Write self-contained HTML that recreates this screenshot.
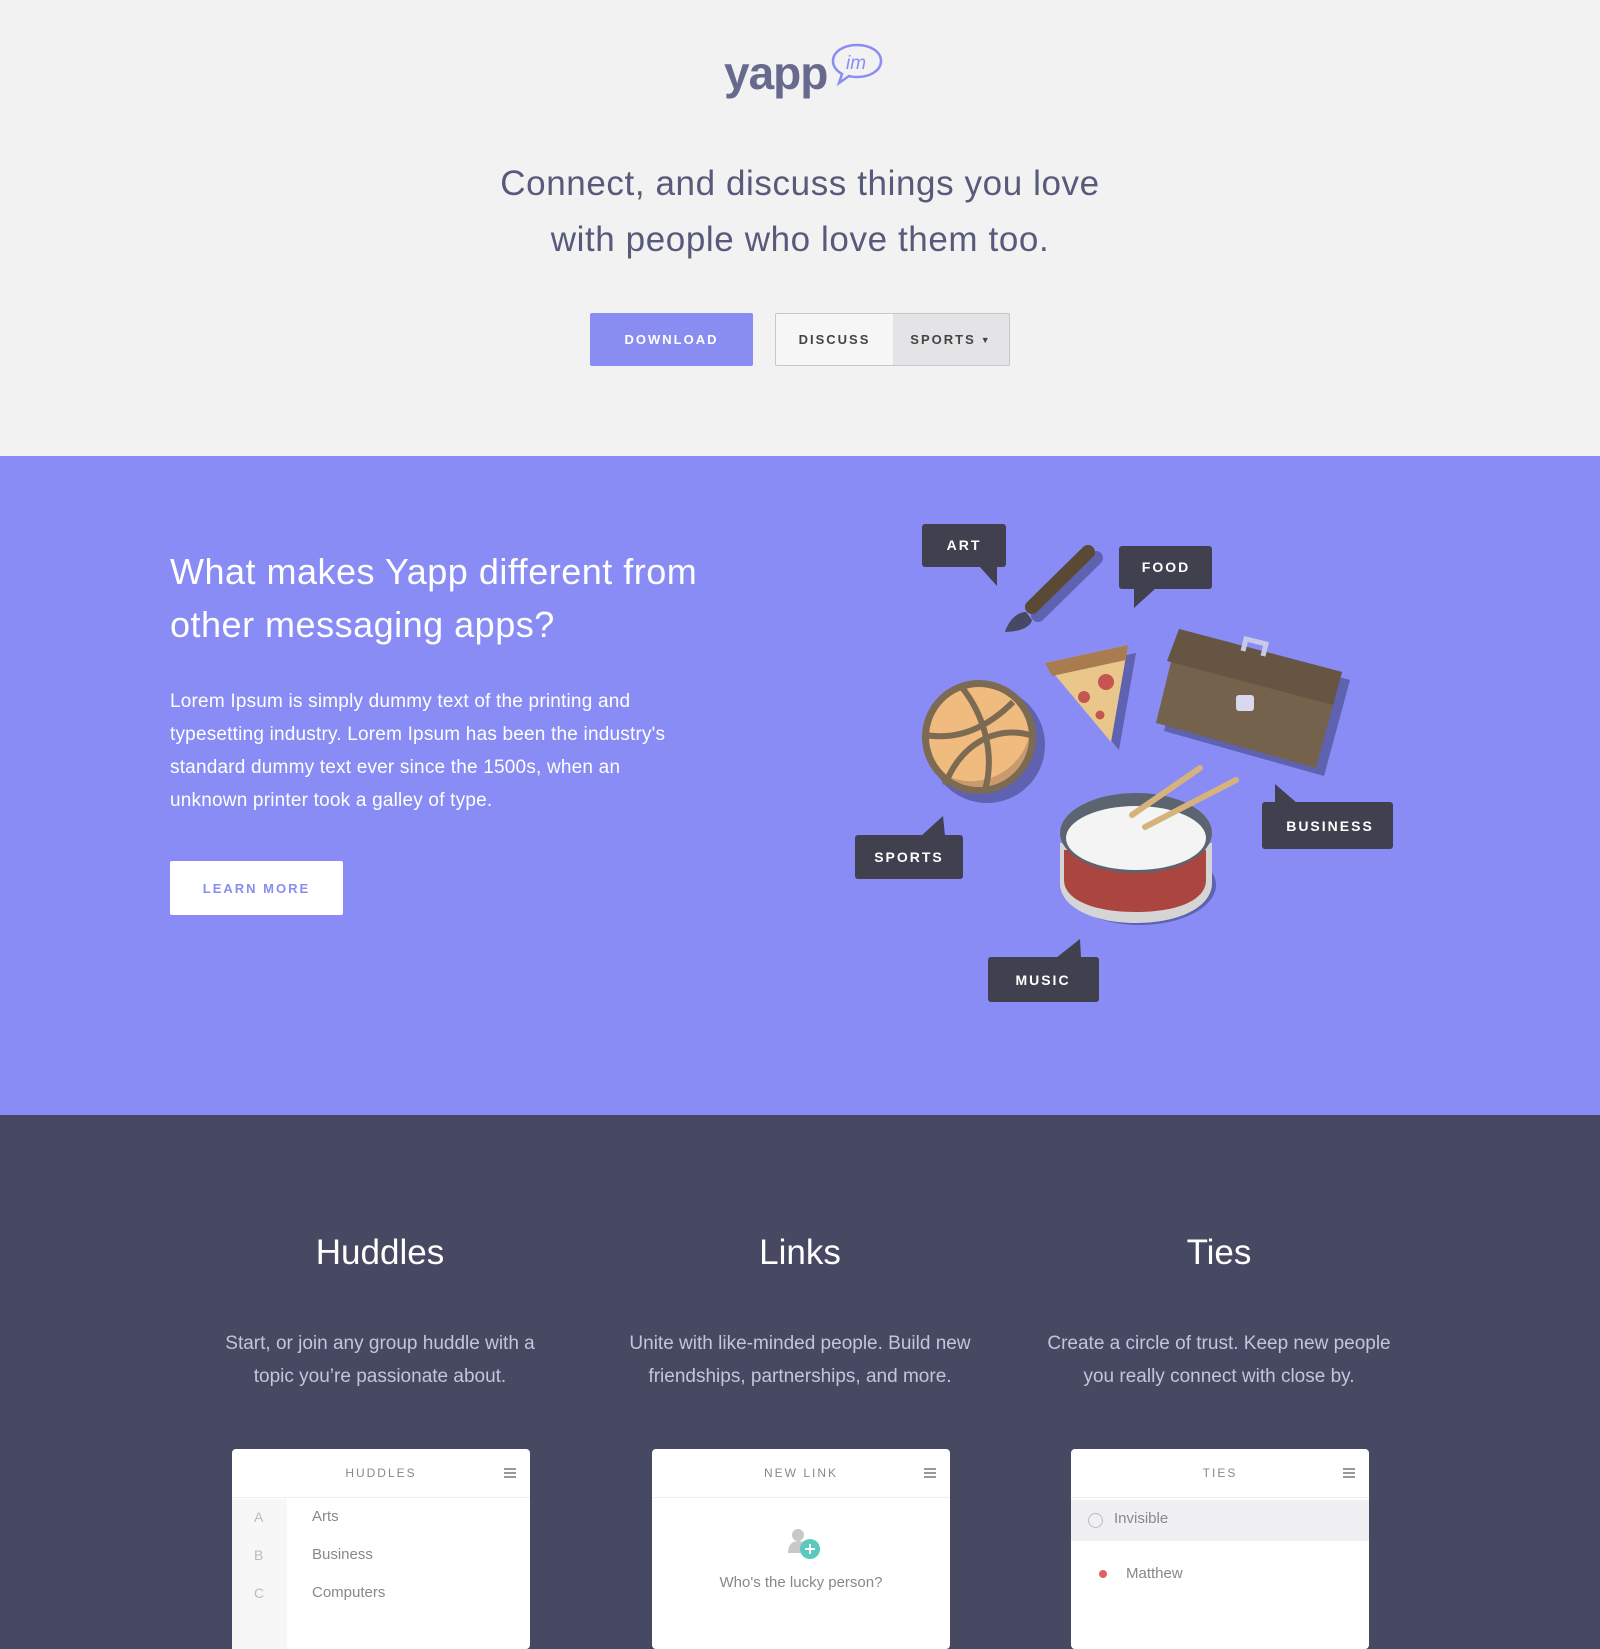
<!DOCTYPE html>
<html><head><meta charset="utf-8"><style>
*{margin:0;padding:0;box-sizing:border-box}
body{width:1600px;height:1600px;overflow:hidden;font-family:"Liberation Sans","DejaVu Sans",sans-serif;background:#474862;position:relative}
.top{position:absolute;left:0;top:0;width:1600px;height:456px;background:#f2f2f2}
.abs{position:absolute}
.btn{position:absolute;font-size:13px;letter-spacing:2px;font-weight:bold;display:flex;align-items:center;justify-content:center}
.purple{position:absolute;left:0;top:456px;width:1600px;height:659px;background:#898cf5}
.card{position:absolute;top:1449px;width:298px;height:200px;background:#fff;border-radius:4px}
.ch{height:49px;border-bottom:1px solid #eee;text-align:center;line-height:49px;font-size:12px;letter-spacing:2px;color:#888;position:relative}
.ch i{position:absolute;right:14px;top:19px;width:12px;height:2px;background:#999;box-shadow:0 4px 0 #999,0 8px 0 #999}
.feat h2{position:absolute;width:420px;text-align:center;font-weight:normal;color:#fff;font-size:35px}
.feat p{position:absolute;width:420px;text-align:center;color:#c4c5d6;font-size:19px;line-height:33px;white-space:nowrap}
</style></head><body>
<div class="top"></div>
<div class="abs" style="left:724px;top:46px;font-size:46px;font-weight:bold;color:#676a8c;letter-spacing:-1px">yapp</div>
<svg class="abs" style="left:828px;top:42px" width="58" height="46" viewBox="0 0 58 46"><path d="M29 3C15 3 5 10 5 19c0 6 4 10 9 13l-3 9 10-7c3 1 5 1 8 1 14 0 24-7 24-16S43 3 29 3z" fill="none" stroke="#8a8df2" stroke-width="2.5"/><text x="28" y="27" text-anchor="middle" font-family="Liberation Sans" font-style="italic" font-size="19" fill="#8a8df2">im</text></svg>
<div class="abs" style="left:0;top:156px;width:1600px;text-align:center;color:#575a7a;font-size:35px;line-height:56px;letter-spacing:0.6px">Connect, and discuss things you love<br>with people who love them too.</div>
<div class="btn" style="left:590px;top:313px;width:163px;height:53px;background:#898cf0;color:#fff;border-radius:2px">DOWNLOAD</div>
<div class="btn" style="left:775px;top:313px;width:118px;height:53px;background:#f6f6f6;border:1px solid #c8c8c8;border-right:none;color:#444;border-radius:2px 0 0 2px">DISCUSS</div>
<div class="btn" style="left:893px;top:313px;width:117px;height:53px;background:#e4e4e6;border:1px solid #c8c8c8;border-left:none;color:#444;border-radius:0 2px 2px 0">SPORTS <span style="font-size:9px;margin-left:5px">▼</span></div>
<div class="purple"></div>
<div class="abs" style="left:170px;top:545px;color:#fff;font-size:36px;line-height:53px;letter-spacing:0.5px;white-space:nowrap">What makes Yapp different from<br>other messaging apps?</div>
<div class="abs" style="left:170px;top:685px;color:#fff;font-size:19px;line-height:33px;letter-spacing:0.2px;white-space:nowrap">Lorem Ipsum is simply dummy text of the printing and<br>typesetting industry. Lorem Ipsum has been the industry's<br>standard dummy text ever since the 1500s, when an<br>unknown printer took a galley of type.</div>
<div class="btn" style="left:170px;top:861px;width:173px;height:54px;background:#fff;color:#898cf0;border-radius:2px">LEARN MORE</div>
<svg class="abs" style="left:0;top:0" width="1600" height="1115">
<g fill="#5f62b0">
<circle cx="987" cy="745" r="58"/>
<path d="M1053 671L1136 653L1119 750Z"/>
<path d="M1187 637L1350 680L1324 776L1164 731Z"/>
<ellipse cx="1140" cy="885" rx="76" ry="40"/>
<path d="M1096 558L1038 615" stroke="#5f62b0" stroke-width="14" stroke-linecap="round"/>
</g>
<circle cx="979" cy="737" r="57" fill="#7c6a52"/>
<circle cx="979" cy="737" r="50" fill="#f0bb7f"/>
<path d="M979 737m50 0a50 50 0 0 1-80 40a60 60 0 0 0 80-40z" fill="#c99a6b"/>
<g stroke="#7c6a52" stroke-width="6" fill="none"><path d="M925 735c30 5 60-5 88-33"/><path d="M945 785c15-40 50-60 85-50"/><path d="M960 685c25 30 35 70 25 105"/></g>
<path d="M1045 663L1128 645L1111 742Z" fill="#e9c78b"/>
<path d="M1045 663L1128 645L1126 660L1052 676Z" fill="#a87c4f"/>
<circle cx="1106" cy="682" r="8" fill="#c65450"/><circle cx="1084" cy="697" r="6" fill="#c65450"/><circle cx="1100" cy="715" r="4.5" fill="#c65450"/>
<path d="M1179 629L1342 672L1316 768L1156 723Z" fill="#74624d"/>
<path d="M1179 629L1342 672L1333 705L1167 661Z" fill="#655542"/>
<rect x="1236" y="695" width="18" height="16" rx="3" fill="#d8d8ef"/>
<path d="M1243 651l3-12 20 5-3 12" fill="none" stroke="#c8c8e8" stroke-width="5"/>
<path d="M1060 843v40c0 25 35 40 76 40s76-15 76-40v-40z" fill="#d5d5d5"/>
<path d="M1064 850v30c0 20 30 32 72 32s70-12 70-32v-30z" fill="#ab4540"/>
<ellipse cx="1136" cy="833" rx="76" ry="40" fill="#5c6470"/>
<ellipse cx="1136" cy="838" rx="70" ry="32" fill="#f4f4f4"/>
<g stroke="#d6b27d" stroke-width="6" stroke-linecap="round"><path d="M1132 815L1200 768"/><path d="M1145 827L1236 780"/></g>
<path d="M1088 552L1032 607" stroke="#5a4a35" stroke-width="14" stroke-linecap="round"/>
<path d="M1026 612c-10 0-18 10-21 20 10 0 25-3 27-12z" fill="#474862"/>
<g fill="#40404f">
<rect x="922" y="524" width="84" height="43" rx="3"/><path d="M979 566h18v20z"/>
<rect x="1119" y="546" width="93" height="43" rx="3"/><path d="M1134 588h22l-22 20z"/>
<rect x="1262" y="802" width="131" height="47" rx="3"/><path d="M1275 803v-19l22 19z"/>
<rect x="855" y="835" width="108" height="44" rx="3"/><path d="M921 836l22-20 2 20z"/>
<rect x="988" y="957" width="111" height="45" rx="3"/><path d="M1056 958l24-19 1 19z"/>
</g>
<g fill="#fff" font-family="Liberation Sans" font-weight="bold" font-size="14" letter-spacing="2" text-anchor="middle">
<text x="964" y="550">ART</text><text x="1166" y="572">FOOD</text><text x="1330" y="831">BUSINESS</text><text x="909" y="862">SPORTS</text><text x="1043" y="985">MUSIC</text>
</g>
</svg>
<div class="feat">
<h2 style="left:170px;top:1233px">Huddles</h2><h2 style="left:590px;top:1233px">Links</h2><h2 style="left:1009px;top:1233px">Ties</h2>
<p style="left:170px;top:1327px">Start, or join any group huddle with a<br>topic you’re passionate about.</p>
<p style="left:590px;top:1327px">Unite with like-minded people. Build new<br>friendships, partnerships, and more.</p>
<p style="left:1009px;top:1327px">Create a circle of trust. Keep new people<br>you really connect with close by.</p>
</div>
<div class="card" style="left:232px"><div class="ch">HUDDLES<i></i></div>
<div style="position:absolute;left:0;top:50px;width:55px;height:150px;background:#f7f7f8"></div>
<div style="position:absolute;left:22px;top:49px;color:#bbb;font-size:14px;line-height:38px">A<br>B<br>C</div>
<div style="position:absolute;left:80px;top:49px;color:#888;font-size:15px;line-height:38px">Arts<br>Business<br>Computers</div></div>
<div class="card" style="left:652px"><div class="ch">NEW LINK<i></i></div>
<svg style="position:absolute;left:134px;top:78px" width="36" height="34"><circle cx="12" cy="8" r="6" fill="#c8c8c8"/><path d="M2 26c0-8 4-12 10-12s8 3 8 12z" fill="#c8c8c8"/><circle cx="24" cy="22" r="10" fill="#5cc9be"/><path d="M24 17v10M19 22h10" stroke="#fff" stroke-width="2"/></svg>
<div style="position:absolute;left:0;top:125px;width:298px;text-align:center;color:#888;font-size:15px">Who's the lucky person?</div></div>
<div class="card" style="left:1071px"><div class="ch">TIES<i></i></div>
<div style="position:absolute;left:0;top:51px;width:298px;height:41px;background:#f0f0f2"></div>
<div style="position:absolute;left:17px;top:64px;width:15px;height:15px;border:1.5px solid #bbb;border-radius:50%"></div>
<div style="position:absolute;left:43px;top:61px;color:#888;font-size:15px">Invisible</div>
<div style="position:absolute;left:28px;top:121px;width:8px;height:8px;background:#e06060;border-radius:50%"></div>
<div style="position:absolute;left:55px;top:116px;color:#888;font-size:15px">Matthew</div></div>
</body></html>
